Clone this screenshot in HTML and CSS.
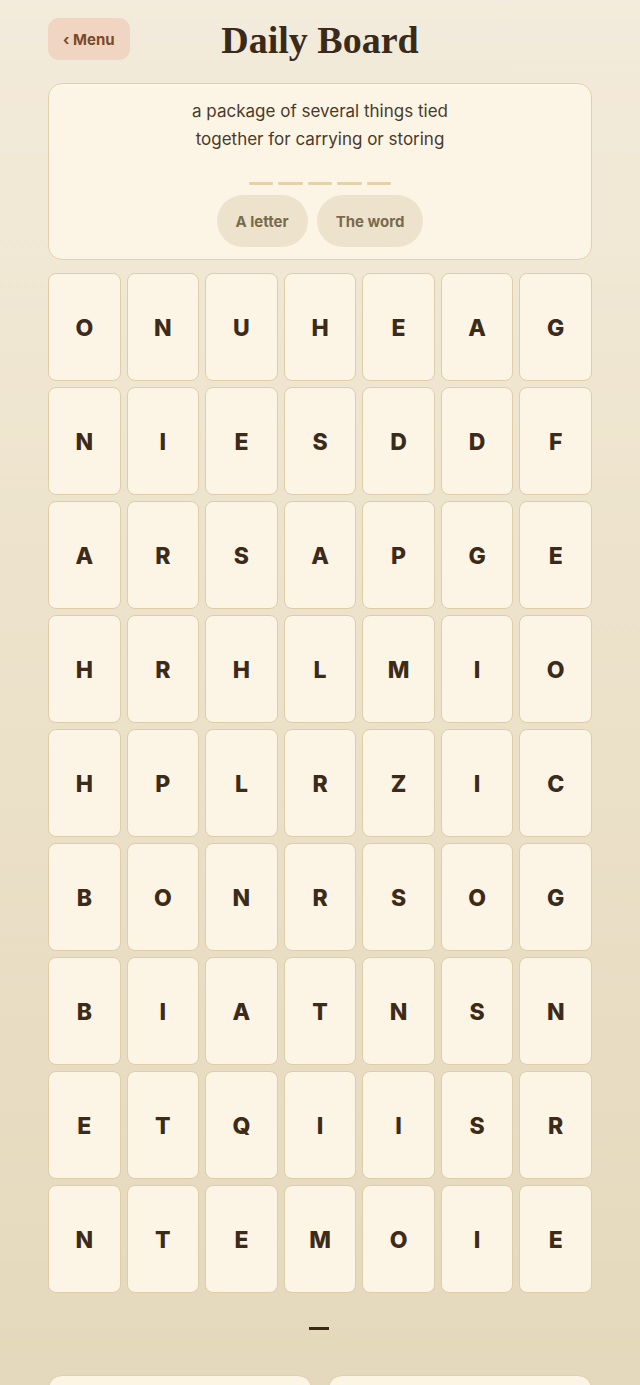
FILE: index.html
```html
<!DOCTYPE html>
<html lang="en">
<head>
<meta charset="utf-8">
<title>Daily Board</title>
<link rel="stylesheet" href="styles.css">
</head>
<body>
<div class="page">
  <header class="top">
    <button class="menu">‹ Menu</button>
    <h1 class="title">Daily Board</h1>
    <span></span>
  </header>
  <section class="clue">
    <p class="clue-text">a package of several things tied<br>together for carrying or storing</p>
    <div class="slots"><span></span><span></span><span></span><span></span><span></span></div>
    <div class="hints">
      <button class="hint">A letter</button>
      <button class="hint">The word</button>
    </div>
  </section>
  <section class="board">
    <div class="cell">O</div><div class="cell">N</div><div class="cell">U</div><div class="cell">H</div><div class="cell">E</div><div class="cell">A</div><div class="cell">G</div>
    <div class="cell">N</div><div class="cell">I</div><div class="cell">E</div><div class="cell">S</div><div class="cell">D</div><div class="cell">D</div><div class="cell">F</div>
    <div class="cell">A</div><div class="cell">R</div><div class="cell">S</div><div class="cell">A</div><div class="cell">P</div><div class="cell">G</div><div class="cell">E</div>
    <div class="cell">H</div><div class="cell">R</div><div class="cell">H</div><div class="cell">L</div><div class="cell">M</div><div class="cell">I</div><div class="cell">O</div>
    <div class="cell">H</div><div class="cell">P</div><div class="cell">L</div><div class="cell">R</div><div class="cell">Z</div><div class="cell">I</div><div class="cell">C</div>
    <div class="cell">B</div><div class="cell">O</div><div class="cell">N</div><div class="cell">R</div><div class="cell">S</div><div class="cell">O</div><div class="cell">G</div>
    <div class="cell">B</div><div class="cell">I</div><div class="cell">A</div><div class="cell">T</div><div class="cell">N</div><div class="cell">S</div><div class="cell">N</div>
    <div class="cell">E</div><div class="cell">T</div><div class="cell">Q</div><div class="cell">I</div><div class="cell">I</div><div class="cell">S</div><div class="cell">R</div>
    <div class="cell">N</div><div class="cell">T</div><div class="cell">E</div><div class="cell">M</div><div class="cell">O</div><div class="cell">I</div><div class="cell">E</div>
  </section>
  <div class="current"><span class="bar"></span></div>
  <div class="actions">
    <button class="action"></button>
    <button class="action"></button>
  </div>
</div>
</body>
</html>
```

FILE: styles.css
```css
* { box-sizing: border-box; }
html, body { margin: 0; padding: 0; }
body {
  min-height: 1385px;
  background: linear-gradient(180deg, #f3ebdb 0%, #ede3cc 40%, #e4d8bb 100%);
  font-family: Inter, "Noto Sans", sans-serif;
  color: #3d2b1a;
  overflow: hidden;
}
.page {
  padding: 18px 48px 0;
}
.top {
  display: grid;
  grid-template-columns: 1fr auto 1fr;
  align-items: center;
  height: 42px;
}
.menu {
  justify-self: start;
  height: 42px;
  padding: 0 15px;
  border: none;
  border-radius: 11px;
  background: #f0d6c2;
  color: #7a4a2a;
  font-family: Inter, sans-serif;
  font-weight: 700;
  font-size: 15px;
}
.title {
  margin: 0;
  font-family: "Liberation Serif", serif;
  font-weight: 700;
  font-size: 38px;
  line-height: 42px;
  color: #3a2a1a;
  position: relative;
  top: 1px;
}
.clue {
  margin-top: 23px;
  height: 177px;
  border: 1px solid #e2d0aa;
  border-radius: 14px;
  background: #fcf5e6;
  padding: 13px 20px 0;
  display: flex;
  flex-direction: column;
  align-items: center;
}
.clue-text {
  margin: 0;
  text-align: center;
  font-size: 17px;
  line-height: 28px;
  color: #4a3a2a;
}
.slots {
  margin-top: 29px;
  display: flex;
  gap: 5px;
}
.slots span {
  width: 24.5px;
  height: 3px;
  background: #e3d3ad;
  border-radius: 1px;
}
.hints {
  margin-top: 10px;
  display: flex;
  gap: 9px;
}
.hint {
  height: 52px;
  padding: 0 19px;
  border: none;
  border-radius: 26px;
  background: #ede3cd;
  color: #7a6a4c;
  font-family: Inter, sans-serif;
  font-weight: 700;
  font-size: 15px;
}
.board {
  margin-top: 13px;
  display: grid;
  grid-template-columns: repeat(7, 1fr);
  grid-auto-rows: 108px;
  gap: 6px;
}
.cell {
  display: flex;
  align-items: center;
  justify-content: center;
  padding-top: 2px;
  background: #fcf5e6;
  border: 1px solid #dfcda8;
  border-radius: 8px;
  font-weight: 800;
  font-size: 23px;
  color: #3d2b1a;
}
.current {
  height: 70px;
  display: flex;
  align-items: center;
  justify-content: center;
}
.bar {
  width: 20px;
  height: 3px;
  background: #3a2a14;
  position: relative;
  left: -1px;
}
.actions {
  margin-top: 12px;
  display: grid;
  grid-template-columns: 1fr 1fr;
  gap: 16px;
}
.action {
  height: 60px;
  border: 1px solid #e2d0aa;
  border-radius: 14px;
  background: #fcf5e6;
}
```
